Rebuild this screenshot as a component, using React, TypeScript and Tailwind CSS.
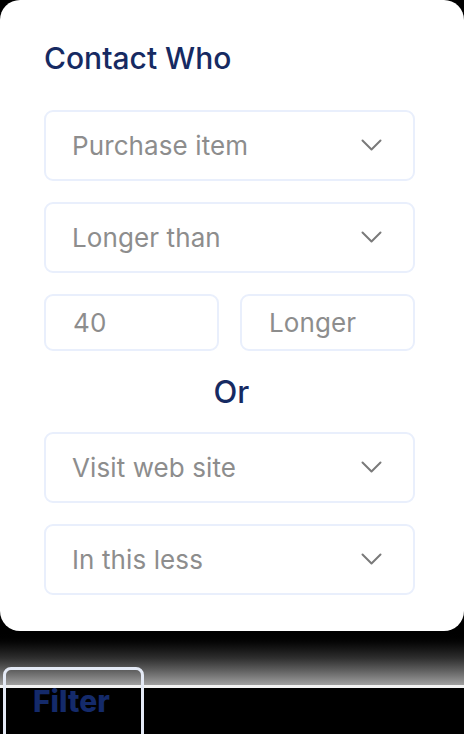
import React from "react";

const font = { fontFamily: "Inter, 'Noto Sans', sans-serif" };

function Chevron() {
  return (
    <svg width="21" height="13" viewBox="0 0 21 13" fill="none" className="shrink-0">
      <path d="M1.5 1.5 L10.5 10.5 L19.5 1.5" stroke="#7a7a7a" strokeWidth="2" strokeLinecap="round" strokeLinejoin="round" />
    </svg>
  );
}

function Select({ label }: { label: string }) {
  return (
    <div className="h-[71px] rounded-[9px] border-2 border-[#e9effc] flex items-center justify-between pl-[26px] pr-[31px]">
      <span className="text-[26px] text-[#8d8d8d] leading-none tracking-[0.1px]">{label}</span>
      <Chevron />
    </div>
  );
}

function Input({ label, pl }: { label: string; pl: string }) {
  return (
    <div className={`h-[57px] rounded-[9px] border-2 border-[#e9effc] flex items-center ${pl}`}>
      <span className="text-[26px] text-[#8d8d8d] leading-none tracking-[0.1px]">{label}</span>
    </div>
  );
}

export default function App() {
  return (
    <div className="relative w-[464px] h-[734px] bg-black overflow-hidden" style={font}>
      <div className="bg-white rounded-[20px] h-[631px] pl-[44px] pr-[49px] pt-[41px]">
        <h1 className="text-[30px] leading-[34px] font-medium text-[#162a62]">Contact Who</h1>
        <div className="mt-[35px] flex flex-col gap-[21px]">
          <Select label="Purchase item" />
          <Select label="Longer than" />
          <div className="grid grid-cols-2 gap-[21px]">
            <Input label="40" pl="pl-[27px]" />
            <Input label="Longer" pl="pl-[27px]" />
          </div>
        </div>
        <div className="h-[81px] flex items-center justify-center pl-[4px]">
          <span className="text-[31px] leading-none font-medium text-[#162a62]">Or</span>
        </div>
        <div className="flex flex-col gap-[21px]">
          <Select label="Visit web site" />
          <Select label="In this less" />
        </div>
      </div>
      <div className="h-[54px] bg-gradient-to-b from-black via-[#2e2e2e] to-[#a0a0a0]" />
      <div className="h-[3px] bg-[#f2f2f2]" />
      <div className="h-[46px] bg-black" />
      <div className="absolute left-[3px] top-[667px] w-[141px] h-[70px] border-[3px] border-[#e4eaf6] rounded-t-[8px] flex items-start pl-[27px] pt-[14px]">
        <span className="text-[30px] leading-[34px] font-extrabold text-[#142a6a]">Filter</span>
      </div>
    </div>
  );
}
